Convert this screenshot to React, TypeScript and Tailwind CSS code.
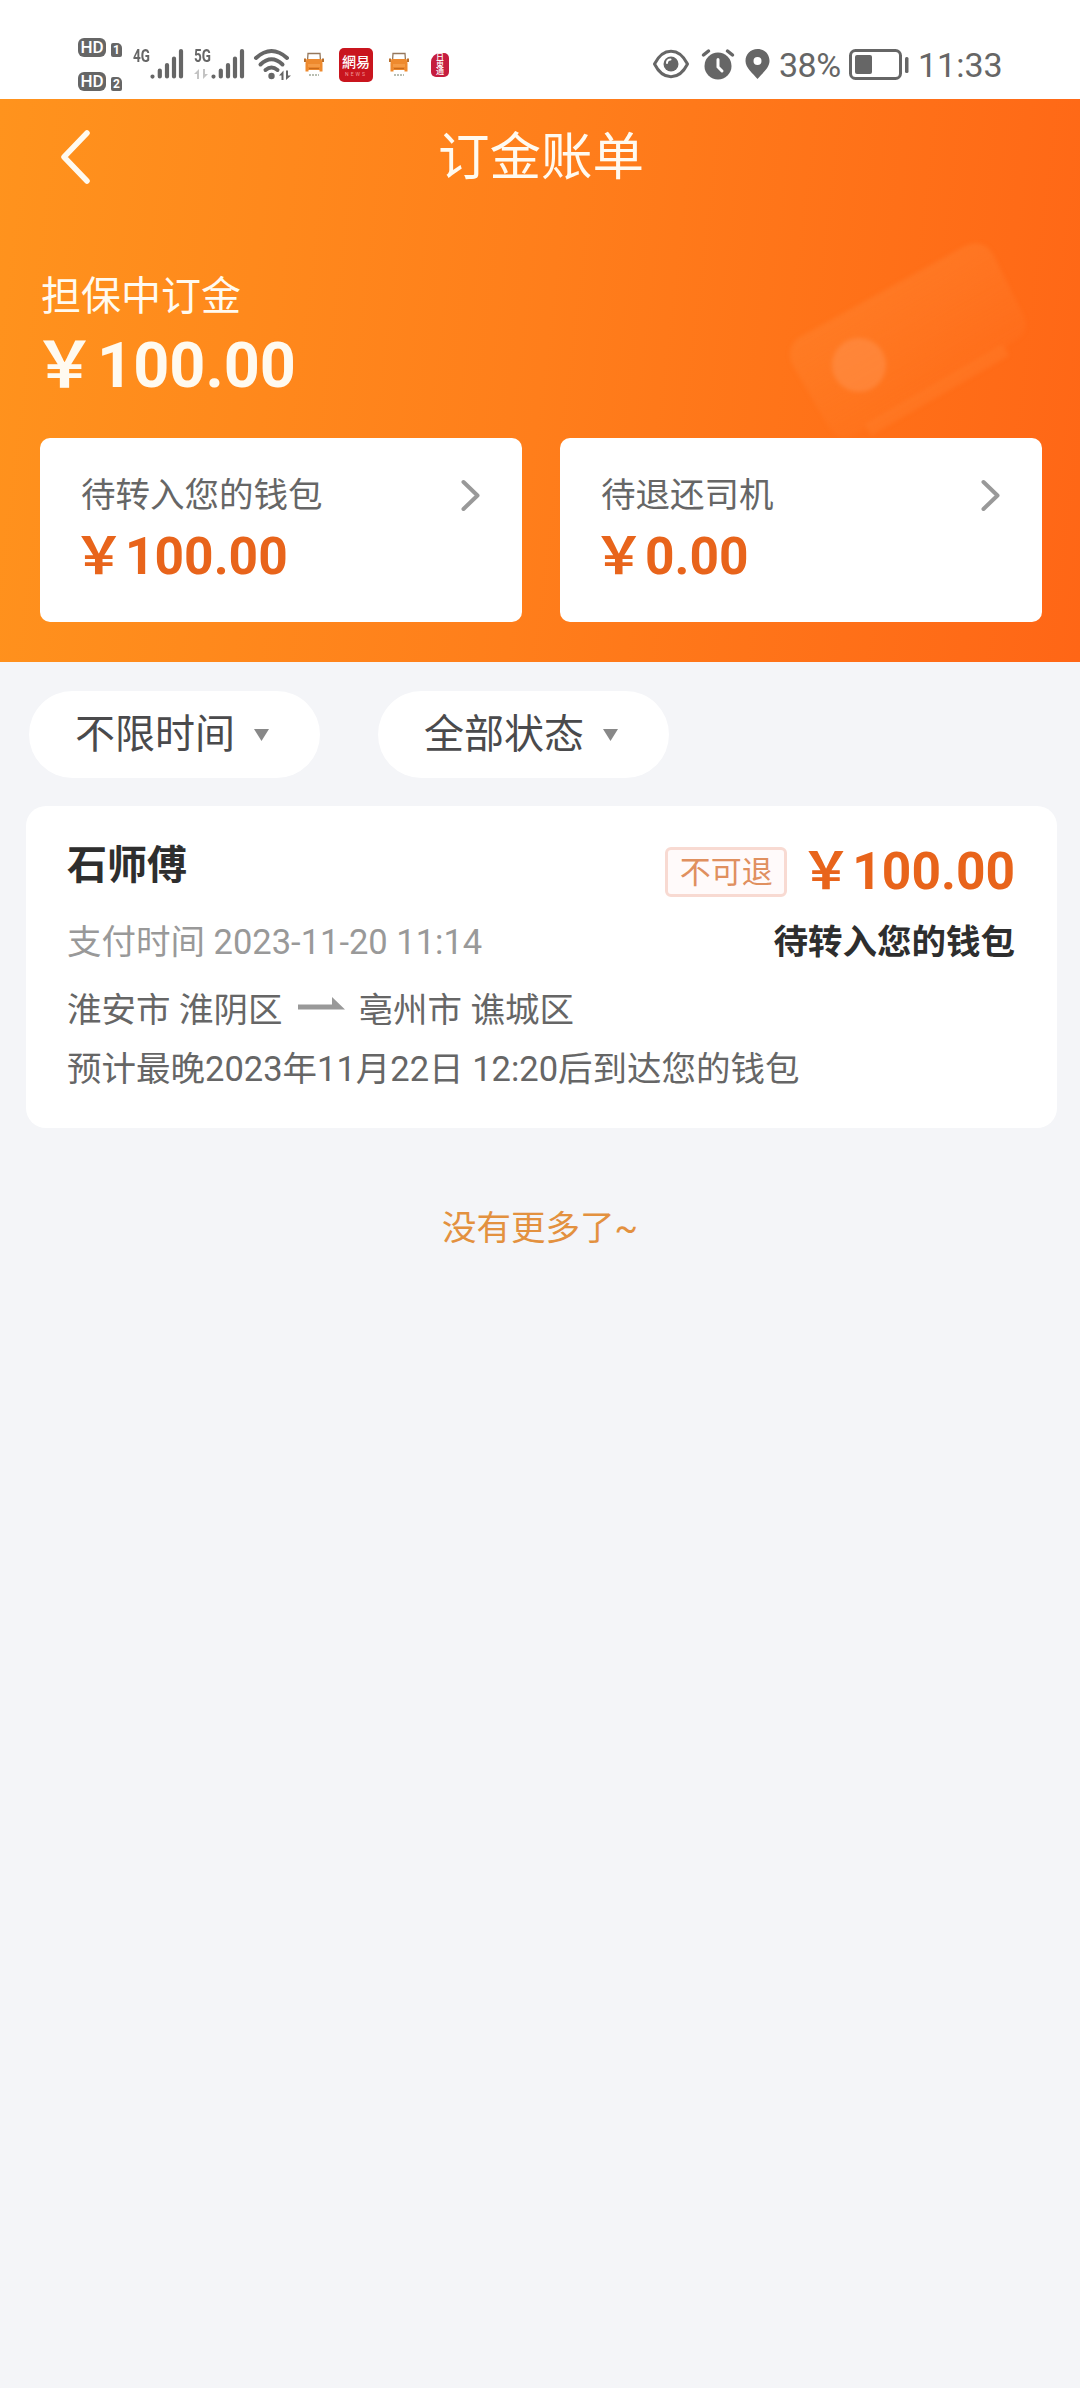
import React, { useState } from "react";

const SignalBars = () => (
  <svg width="34" height="31" viewBox="0 0 34 31" fill="none" stroke="#666" strokeWidth="4.2" strokeLinecap="round">
    <path d="M2.5 28.5v.1M9.8 22.5v6M17 17v11.500M24 10.500v18M31 3v25.500" />
  </svg>
);

const HdBadge = ({ slot }: { slot: string }) => (
  <div className="flex h-5 items-end gap-[5px]">
    <span className="flex h-[19px] w-[28px] items-center justify-center rounded-[6px] bg-[#666] text-[17px] leading-none font-medium text-white">
      HD
    </span>
    <span className="flex h-[14px] w-[11px] items-center justify-center rounded-[2px] rounded-tr-[5px] bg-[#666] text-[12px] leading-none font-bold text-white">
      {slot}
    </span>
  </div>
);

const TruckIcon = () => (
  <svg width="20" height="25" viewBox="0 0 20 25">
    <path d="M3.500 9 4 1.500h12l.5 7.500" fill="#fff" stroke="#96785c" strokeWidth="1.300" />
    <path d="M2.500 7h15l1 4v8.500h-3V18h-11v1.500h-3V11z" fill="#ee8a2e" />
    <path d="M0 6.500h2V10H0zM18 6.500h2V10h-2z" fill="#b8702f" />
    <path d="M4 12h12v3H4z" fill="#f59b45" />
    <path d="M5 16.500h10" stroke="#c96a1a" strokeWidth="1.200" />
    <path d="M5 23h10" stroke="#a3ab9b" strokeWidth="1.500" strokeDasharray="2 1" />
  </svg>
);

const StatusBar = () => (
  <div className="flex h-[99px] items-start bg-white pt-[48px] pl-[78px] text-[#666]">
    <div className="-mt-[11px] flex w-[45px] flex-col gap-[14px]">
      <HdBadge slot="1" />
      <HdBadge slot="2" />
    </div>
    <span className="ml-[10px] w-[17px] text-[18px] leading-4 font-bold">
      <span className="inline-block origin-left scale-x-[0.75]">4G</span>
    </span>
    <SignalBars />
    <div className="ml-[10px] flex w-[17px] flex-col">
      <span className="inline-block origin-left scale-x-[0.75] text-[18px] leading-4 font-bold">5G</span>
      <svg className="mt-[5px]" width="14" height="11" viewBox="0 0 14 11" fill="#c4c4c4">
        <path d="M0 5 5 0v10H3V5zM14 5 9 10V0h2v5z" />
      </svg>
    </div>
    <SignalBars />
    <svg className="ml-2" width="38" height="33" viewBox="0 0 38 33" fill="none" stroke="#666" strokeWidth="4" strokeLinecap="round">
      <path d="M3 10Q18.500-4 34 10" />
      <path d="M7.500 16.500Q18.500 6 29.500 16.500" />
      <path d="M12.500 22Q18.500 17 24.500 22" />
      <circle cx="18.500" cy="28" r="3.200" fill="#666" stroke="none" />
      <path d="M26 27.500 30.500 22.500v9.500h-2v-4.500zM38 27.500 33 32v-9.500h2v5z" fill="#666" stroke="none" />
    </svg>
    <div className="mt-1 ml-[13px]">
      <TruckIcon />
    </div>
    <div className="ml-[15px] flex h-[34px] w-[34px] flex-col items-center rounded-[5px] bg-[#c9151e] text-white">
      <span className="mt-[6px] text-[14px] leading-[17px] font-medium whitespace-nowrap">網易</span>
      <span className="text-[5px] leading-[6px] tracking-[2px] text-[#f19a9a]">NEWS</span>
    </div>
    <div className="mt-1 ml-[16px]">
      <TruckIcon />
    </div>
    <div className="mt-[5px] ml-[22px] flex h-6 w-[18px] flex-col items-center rounded-[5px] rounded-tl-[9px] bg-[#c51d3f] pt-[1px] text-[8px] leading-[7px] font-medium text-white">
      <span>日</span>
      <span>東</span>
      <span>通</span>
    </div>

    {/* right side */}
    <svg className="ml-[203px]" width="38" height="31" viewBox="0 0 38 31" fill="none">
      <path d="M2.500 16C11-1 27-1 35.500 16 27 33 11 33 2.500 16z" stroke="#666" strokeWidth="3" strokeLinejoin="round" />
      <circle cx="19" cy="16" r="7.500" fill="#666" />
      <path d="M15 15q0-3.500 3.500-3.500" stroke="#fff" strokeWidth="2" strokeLinecap="round" />
    </svg>
    <svg className="ml-[11px]" width="34" height="32" viewBox="0 0 34 32" fill="none" strokeLinecap="round">
      <circle cx="17" cy="18" r="13.500" fill="#666" />
      <path d="M2.500 7 7.500 3M31.500 7l-5-4" stroke="#666" strokeWidth="3.500" />
      <path d="M17 11.500V19l4 4" stroke="#fff" strokeWidth="3" />
    </svg>
    <svg className="ml-[10px]" width="25" height="32" viewBox="0 0 25 32">
      <path fillRule="evenodd" fill="#666" d="M12.500 1C5.500 1 .5 6 .5 13c0 7 7.500 12.500 12 18 4.500-5.500 12-11 12-18 0-7-5-12-12-12zm0 8a4 4 0 1 1 0 8 4 4 0 0 1 0-8z" />
    </svg>
    <span className="ml-[9px] w-[70px] text-[34px] leading-[35px] tracking-[-0.5px]">38%</span>
    <svg width="60" height="33" viewBox="0 0 60 33">
      <rect x="1.500" y="2.500" width="50" height="28" rx="5" fill="none" stroke="#666" strokeWidth="3" />
      <rect x="6" y="7" width="17" height="19" rx="2" fill="#666" />
      <rect x="56" y="9" width="3.500" height="16" rx="1.500" fill="#666" />
    </svg>
    <span className="ml-[9px] text-[34px] leading-[35px]">11:33</span>
  </div>
);

const Amount = ({ value, large }: { value: string; large?: boolean }) => (
  <span
    className={
      large
        ? "flex text-[63px] leading-[64px] font-bold"
        : "flex text-[51.500px] leading-[52px] font-bold"
    }
  >
    <span className={large ? "-ml-[9px] w-[64px]" : "-ml-[8px] w-[52px]"}>￥</span>
    {value}
  </span>
);

const WalletCard = ({ label, value }: { label: string; value: string }) => (
  <div className="flex h-[184px] w-[482px] flex-col rounded-[10px] bg-white pt-[37px] pr-[41px] pl-[41px]">
    <div className="flex h-10 items-center justify-between text-[34.500px] leading-10 text-[#666]">
      {label}
      <svg width="20" height="32" viewBox="0 0 20 32" fill="none" stroke="#999" strokeWidth="4" strokeLinecap="round" strokeLinejoin="round">
        <path d="M2.500 3 16.500 16.500 2.500 30" />
      </svg>
    </div>
    <div className="mt-[16px] text-[#e8641b]">
      <Amount value={value} />
    </div>
  </div>
);

const Filter = ({ label, onClick }: { label: string; onClick: () => void }) => (
  <button
    onClick={onClick}
    className="flex h-[87px] w-[291px] items-center rounded-full bg-white pl-[46px] text-[40px] leading-none text-[#4a4a4c]"
  >
    <span>{label}</span>
    <svg className="ml-[19px]" width="15" height="12" viewBox="0 0 15 12">
      <path d="M0 0h15L7.500 12z" fill="#888" />
    </svg>
  </button>
);

export default function App() {
  const [time] = useState("不限时间");
  const [status] = useState("全部状态");

  return (
    <div className="h-[2388px] w-[1080px] overflow-hidden bg-[#f4f5f8] font-[Roboto,'Noto_Sans_CJK_SC',sans-serif]">
      <StatusBar />

      {/* Header */}
      <header className="relative h-[563px] bg-[linear-gradient(97deg,#ff931d_0%,#ff7e1b_50%,#ff6616_100%)] px-10 text-[#fffaf0]">
        <svg className="absolute top-[131px] left-[770px] blur-[2px]" width="290" height="208" viewBox="0 0 290 208">
          <defs>
            <linearGradient id="card" x1="0" y1="0" x2="0.700" y2="1">
              <stop offset="0.300" stopColor="#ff8c3c" stopOpacity="0.350" />
              <stop offset="1" stopColor="#ff8c3c" stopOpacity="0" />
            </linearGradient>
          </defs>
          <path d="M28 108 195 16q18-8 28 8l30 60q8 18-8 27L86 204q-18 10-28-8L22 134q-6-16 6-26z" fill="url(#card)" />
          <path d="M98 200 236 120" stroke="#ff8c3c" strokeOpacity="0.250" strokeWidth="13" />
          <circle cx="89" cy="135" r="27" fill="#ff9350" fillOpacity="0.500" />
        </svg>

        <div className="relative grid h-[114px] grid-cols-[1fr_auto_1fr] items-center">
          <svg className="mt-px ml-[19px]" width="32" height="54" viewBox="0 0 32 54" fill="none" stroke="#fffaf0" strokeWidth="5.500" strokeLinecap="round" strokeLinejoin="round">
            <path d="M28 3 5 27l23 24" />
          </svg>
          <h1 className="mt-[3px] ml-[2px] text-[51.500px] leading-none">订金账单</h1>
        </div>

        <p className="relative mt-[64px] ml-px text-[40px] leading-10">担保中订金</p>
        <div className="relative mt-[17px] ml-[2px]">
          <Amount value="100.00" large />
        </div>
        <div className="relative mt-[40px] -mr-[2px] flex justify-between">
          <WalletCard label="待转入您的钱包" value="100.00" />
          <WalletCard label="待退还司机" value="0.00" />
        </div>
      </header>

      {/* Filters */}
      <div className="flex gap-[58px] pt-[29px] pl-[29px]">
        <Filter label={time} onClick={() => {}} />
        <Filter label={status} onClick={() => {}} />
      </div>

      {/* Order */}
      <div className="mt-[28px] ml-[26px] h-[322px] w-[1031px] rounded-[20px] bg-white pt-[39px] pr-[42px] pl-[41px] text-[34.500px] leading-10 text-[#666]">
        <div className="flex h-[55px] justify-between">
          <h2 className="mt-px text-[40px] leading-10 font-bold text-[#2e2e2e]">石师傅</h2>
          <div className="flex items-start">
            <span className="mt-[2px] mr-[21px] flex h-[50px] w-[122px] items-center justify-center rounded-[6px] border-[3px] border-[#f8dad2] bg-[#fffafa] text-[31px] leading-none text-[#e0905f]">
              不可退
            </span>
            <span className="mt-px text-[#e8641b]">
              <Amount value="100.00" />
            </span>
          </div>
        </div>
        <div className="mt-[22px] flex justify-between">
          <span className="text-[#999]">支付时间 2023-11-20 11:14</span>
          <span className="font-bold text-[#2e2e2e]">待转入您的钱包</span>
        </div>
        <div className="mt-[28px] flex">
          <span>淮安市 淮阴区</span>
          <svg className="mr-[14px] ml-[15px] mt-[7px]" width="47" height="13" viewBox="0 0 47 13">
            <path d="M0 7.500h34V0l13 12.500H0z" fill="#999" />
          </svg>
          <span>亳州市 谯城区</span>
        </div>
        <p className="mt-[19px]">预计最晚2023年11月22日 12:20后到达您的钱包</p>
      </div>

      <p className="mt-[80px] text-center text-[34.500px] leading-10 text-[#e3913f]">没有更多了~</p>
    </div>
  );
}
